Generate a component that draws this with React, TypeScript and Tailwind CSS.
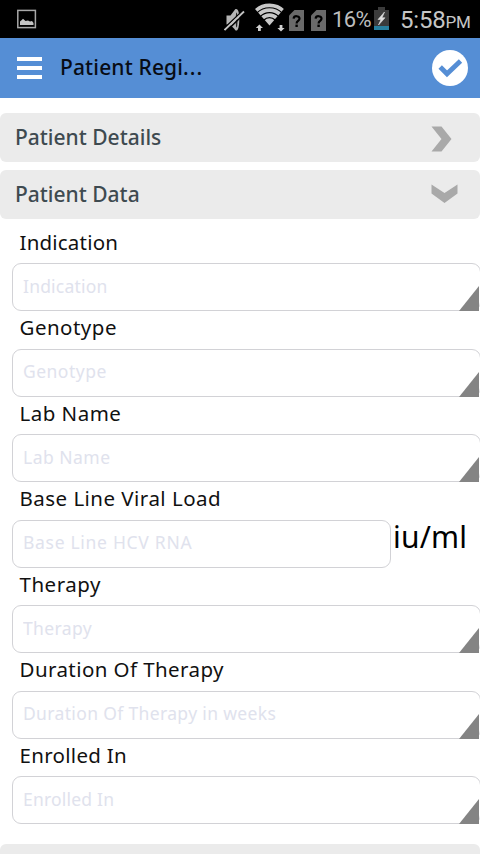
import { useState } from "react";

type Field = {
  label: string;
  placeholder: string;
  labelClass: string;
  inputClass: string;
  unit?: string;
};

const fields: Field[] = [
  { label: "Indication", placeholder: "Indication", labelClass: "tracking-[0.2px]", inputClass: "placeholder:tracking-[0.2px]" },
  { label: "Genotype", placeholder: "Genotype", labelClass: "tracking-[0.48px]", inputClass: "placeholder:tracking-[0.48px]" },
  { label: "Lab Name", placeholder: "Lab Name", labelClass: "tracking-[0.48px]", inputClass: "placeholder:tracking-[0.48px]" },
  { label: "Base Line Viral Load", placeholder: "Base Line HCV RNA", labelClass: "tracking-[0.47px]", inputClass: "placeholder:tracking-[0.7px]", unit: "iu/ml" },
  { label: "Therapy", placeholder: "Therapy", labelClass: "tracking-[0.5px]", inputClass: "placeholder:tracking-[0.38px]" },
  { label: "Duration Of Therapy", placeholder: "Duration Of Therapy in weeks", labelClass: "tracking-[0.42px]", inputClass: "placeholder:tracking-[0.35px]" },
  { label: "Enrolled In", placeholder: "Enrolled In", labelClass: "tracking-[0.3px]", inputClass: "placeholder:tracking-[0.2px]" },
];

function SimIcon() {
  return (
    <svg width="15" height="21" viewBox="0 0 15 21">
      <path d="M5.500 0H15V21H0V5.500Z" fill="#6a6a6a" />
      <path d="M4.600 8.600C4.900 5.400 10.600 5.400 10.500 8.800C10.400 11 7.600 10.800 7.600 13.400" fill="none" stroke="#000" strokeWidth="2.200" />
      <path d="M6.400 14.600H8.800V17H6.400Z" fill="#000" />
    </svg>
  );
}

function StatusBar() {
  return (
    <div className="flex h-[38px] shrink-0 items-start bg-black font-['Roboto',sans-serif] text-[#bdbdbd]">
      <svg className="mt-[9px] ml-[17px]" width="20" height="20" viewBox="0 0 20 20">
        <rect x="0.8" y="1.4" width="17.6" height="17.2" fill="none" stroke="#a8a8a8" strokeWidth="1.5" />
        <path d="M3 16V12.500L4.800 11L6 9.800L8.500 12L11 11.500L13 12.500L15 12L16.500 14V16Z" fill="#c4c4c4" />
      </svg>
      <svg className="mt-[8px] ml-[187px]" width="21" height="24" viewBox="0 0 21 24">
        <path d="M2.500 7.500H6.500L11 1.500C12.500 0.500 14 1.500 14.600 4C15.600 8 15.600 16 14.400 20C13.600 23 11.600 23.500 10.500 21L6 16.500H2.500Z" fill="#b5b5b5" />
        <ellipse cx="12.600" cy="12" rx="0.900" ry="7.500" fill="#222" />
        <path d="M0 20.500L19 2.500M2 23.500L21 5" stroke="#000" strokeWidth="1.600" />
        <path d="M0.500 22L20 3.500" stroke="#c4c4c4" strokeWidth="1.800" />
      </svg>
      <svg className="mt-[3px] ml-[10px]" width="31" height="29" viewBox="0 0 31 29">
        <clipPath id="wifi-wedge">
          <path d="M14.500 22.500L-6 -1V-6H35V-1Z" />
        </clipPath>
        <g clipPath="url(#wifi-wedge)" fill="none" stroke="#c8c8c8" strokeWidth="3.700">
          <circle cx="14.500" cy="22.500" r="20.200" />
          <circle cx="14.500" cy="22.500" r="15.300" />
          <circle cx="14.500" cy="22.500" r="10.400" />
          <circle cx="14.500" cy="22.500" r="7.200" fill="#c8c8c8" stroke="none" />
        </g>
        <path d="M4.400 21.500L8 25H5.800V28H3V25H0.800Z" fill="#d0d0d0" />
        <path d="M26 28.500L22.400 25H24.600V22H27.400V25H29.600Z" fill="#d0d0d0" />
      </svg>
      <div className="mt-[10px] ml-[3px] flex gap-[7px]">
        <SimIcon />
        <SimIcon />
      </div>
      <span className="mt-[7px] ml-[6px] w-[41px] text-[22px] leading-[26px] tracking-[-0.6px]">16%</span>
      <svg className="mt-[7px] ml-px" width="15" height="23" viewBox="0 0 15 23">
        <path d="M4 0H11V3H15V23H0V3H4Z" fill="#3b3b3b" />
        <rect y="19" width="15" height="4" fill="#287f9e" />
        <path d="M10.500 5L4 12.500H7L4.500 18L11 10.800H8Z" fill="#ddd" stroke="#ddd" strokeWidth="0.6" />
      </svg>
      <span className="mt-[5px] ml-[11px] flex items-baseline text-[24px] leading-[30px] tracking-[-0.2px] whitespace-nowrap text-[#c6c6c6]">
        5:58<span className="text-[17px]">PM</span>
      </span>
    </div>
  );
}

function Header() {
  return (
    <header className="flex h-[60px] shrink-0 items-center bg-[#558ed5] pr-3 pl-[17px]">
      <button className="flex w-[25px] flex-col gap-[5px]" aria-label="Menu">
        <span className="h-1 w-full bg-white" />
        <span className="h-1 w-full bg-white" />
        <span className="h-1 w-full bg-white" />
      </button>
      <h1 className="mb-[3px] ml-[18px] text-[21px] leading-[30px] font-medium tracking-[0.15px] whitespace-nowrap text-[#080c14]">
        Patient Regi<span className="tracking-[1px]">...</span>
      </h1>
      <button className="ml-auto" aria-label="Save">
        <svg width="36" height="36" viewBox="0 0 36 36">
          <circle cx="18" cy="18" r="18" fill="#fff" />
          <path d="M8.200 17L15 23.800L28.500 11" fill="none" stroke="#558ed5" strokeWidth="4.800" />
        </svg>
      </button>
    </header>
  );
}

function SectionBar({ title, open, onClick }: { title: string; open: boolean; onClick?: () => void }) {
  return (
    <button onClick={onClick} className="flex h-[49px] w-full shrink-0 items-center justify-between rounded-[6px] bg-[#ebebeb] pr-[22px] pl-[15px]">
      <span className="text-[21px] font-medium text-[#3e4a50]">{title}</span>
      {open ? (
        <svg className="mb-[2px]" width="27" height="20" viewBox="0 0 27 20">
          <path d="M0.500 0.500L13.500 9L26.500 0.500V9.500L13.500 19L0.500 9.500Z" fill="#a9a9a9" />
        </svg>
      ) : (
        <svg className="mt-[2px] mr-[6px]" width="21" height="26" viewBox="0 0 21 26">
          <path d="M0.500 0.500H10.500L20.500 13L10.500 25.500H0.500L10.500 13Z" fill="#a9a9a9" />
        </svg>
      )}
    </button>
  );
}

function FieldRow({ field }: { field: Field }) {
  return (
    <div className="flex h-[85.5px] shrink-0 flex-col">
      <label className={`h-[37.5px] pl-[19.5px] text-[20.5px] leading-[33px] whitespace-nowrap text-[#111] ${field.labelClass}`}>{field.label}</label>
      <div className="flex h-[48px] pl-3">
        {field.unit ? (
          <>
            <input
              placeholder={field.placeholder}
              className={`h-full w-[379px] rounded-[9px] border-[1.5px] border-[#d2d2d6] bg-white pb-[3px] pl-[10px] text-[17.5px] placeholder:text-[#e0e2ed] ${field.inputClass}`}
            />
            <span className="ml-[2px] text-[30px] leading-[34px] tracking-[0.2px] whitespace-nowrap text-black">{field.unit}</span>
          </>
        ) : (
          <div className="relative h-full w-[469px] shrink-0">
            <input
              readOnly
              placeholder={field.placeholder}
              className={`h-full w-full rounded-[9px] border-[1.5px] border-[#d2d2d6] bg-white pb-[3px] pl-[10px] text-[17.5px] placeholder:text-[#e0e2ed] ${field.inputClass}`}
            />
            <svg className="absolute right-[2px] bottom-0" width="20" height="25" viewBox="0 0 20 25">
              <path d="M20 0V25H0Z" fill="#848484" />
            </svg>
          </div>
        )}
      </div>
    </div>
  );
}

export default function App() {
  const [open, setOpen] = useState(true);

  return (
    <div className="flex h-[854px] w-[480px] flex-col overflow-hidden bg-white font-['Noto_Sans',sans-serif]">
      <StatusBar />
      <Header />
      <main className="flex flex-col pt-[15px]">
        <SectionBar title="Patient Details" open={false} />
        <div className="h-2 shrink-0" />
        <SectionBar title="Patient Data" open={open} onClick={() => setOpen(!open)} />
        {open && (
          <div className="flex flex-col pt-[6.5px] pb-[20px]">
            {fields.map((field) => (
              <FieldRow key={field.label} field={field} />
            ))}
          </div>
        )}
        <div className="h-[49px] shrink-0 rounded-[6px] bg-[#ebebeb]" />
      </main>
    </div>
  );
}
